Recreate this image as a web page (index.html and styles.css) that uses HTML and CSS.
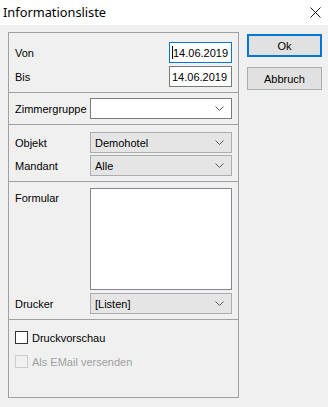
FILE: index.html
```html
<!DOCTYPE html>
<html lang="de">
<head>
<meta charset="utf-8">
<title>Informationsliste</title>
<link rel="stylesheet" href="styles.css">
</head>
<body>
<div class="window">
  <div class="titlebar">
    <span class="title">Informationsliste</span>
    <svg class="close" width="11" height="11" viewBox="0 0 11 11"><path d="M0.5 0.5 L10.5 10.5 M10.5 0.5 L0.5 10.5" stroke="#1a1a1a" stroke-width="1" fill="none"/></svg>
  </div>
  <div class="content">
    <div class="frame">
      <div class="section s1">
        <div class="row">
          <span class="label">Von</span>
          <div class="datebox focus"><span class="caret"></span>14.06.2019</div>
        </div>
        <div class="row">
          <span class="label">Bis</span>
          <div class="datebox">14.06.2019</div>
        </div>
      </div>
      <div class="section s2">
        <div class="row">
          <span class="label">Zimmergruppe</span>
          <div class="combo edit"><span class="value"></span>
            <svg class="chev" width="9" height="5" viewBox="0 0 9 5"><path d="M0.5 0.5 L4.5 4.5 L8.5 0.5" stroke="#5a5a5a" fill="none"/></svg>
          </div>
        </div>
      </div>
      <div class="section s3">
        <div class="row">
          <span class="label">Objekt</span>
          <div class="combo"><span class="value">Demohotel</span>
            <svg class="chev" width="9" height="5" viewBox="0 0 9 5"><path d="M0.5 0.5 L4.5 4.5 L8.5 0.5" stroke="#5a5a5a" fill="none"/></svg>
          </div>
        </div>
        <div class="row">
          <span class="label">Mandant</span>
          <div class="combo"><span class="value">Alle</span>
            <svg class="chev" width="9" height="5" viewBox="0 0 9 5"><path d="M0.5 0.5 L4.5 4.5 L8.5 0.5" stroke="#5a5a5a" fill="none"/></svg>
          </div>
        </div>
      </div>
      <div class="section s4">
        <div class="row top">
          <span class="label lbl-top">Formular</span>
          <div class="listbox"></div>
        </div>
        <div class="row">
          <span class="label">Drucker</span>
          <div class="combo"><span class="value">[Listen]</span>
            <svg class="chev" width="9" height="5" viewBox="0 0 9 5"><path d="M0.5 0.5 L4.5 4.5 L8.5 0.5" stroke="#5a5a5a" fill="none"/></svg>
          </div>
        </div>
      </div>
      <div class="section s5">
        <label class="check"><span class="box"></span><span>Druckvorschau</span></label>
        <label class="check disabled"><span class="box"></span><span>Als EMail versenden</span></label>
      </div>
    </div>
    <div class="buttons">
      <div class="btn default">Ok</div>
      <div class="btn">Abbruch</div>
    </div>
  </div>
</div>
</body>
</html>
```
FILE: styles.css
```css
* { box-sizing: border-box; }
html, body { margin: 0; padding: 0; }
body {
  width: 328px;
  height: 407px;
  overflow: hidden;
  background: #f0f0f0;
  font-family: "Liberation Sans", Arial, sans-serif;
  font-size: 11px;
  color: #000;
}
.window { width: 328px; height: 407px; display: flex; flex-direction: column; }
.titlebar {
  height: 25px;
  background: #fff;
  display: flex;
  align-items: center;
  justify-content: space-between;
  padding: 0 7px 1px 3px;
}
.title {
  font-family: "Noto Sans", "Open Sans", sans-serif;
  font-size: 12.8px;
  color: #000;
}
.close { display: block; }
.content {
  display: flex;
  align-items: flex-start;
  padding: 7px 6px 0 8px;
  gap: 8px;
}
.frame {
  width: 232px;
  height: 366px;
  border: 1px solid #a0a0a0;
  display: flex;
  flex-direction: column;
}
.section {
  padding: 0 6px 0 6px;
  display: flex;
  flex-direction: column;
}
.section + .section { border-top: 1px solid #a0a0a0; }
.s1 { height: 59px; padding-top: 9px; gap: 3px; }
.s2 { height: 32px; padding-top: 5px; }
.s3 { height: 57px; padding-top: 7px; gap: 2px; }
.s4 { height: 138px; padding-top: 6px; gap: 3px; }
.s5 { flex: 1; padding-top: 11px; gap: 11px; }
.row { display: flex; align-items: center; height: 21px; }
.row.top { align-items: flex-start; height: auto; }
.label { width: 75px; flex: none; white-space: nowrap; }
.lbl-top { padding-top: 4px; }
.datebox {
  margin-left: auto;
  width: 63px;
  height: 21px;
  background: #fff;
  border: 1px solid #7a7a7a;
  padding-left: 2px;
  display: flex;
  align-items: center;
}
.datebox.focus { border-color: #0078d7; }
.caret { width: 1px; height: 13px; background: #000; margin-right: 0; }
.combo {
  flex: 1;
  height: 21px;
  border: 1px solid #adadad;
  background: #e5e5e5;
  display: flex;
  align-items: center;
  padding: 0 7px 0 4px;
}
.combo.edit { background: #fff; border-color: #7a7a7a; }
.combo .value { flex: 1; }
.chev { display: block; }
.listbox {
  flex: 1;
  height: 102px;
  background: #fff;
  border: 1px solid #828790;
}
.check { display: flex; align-items: center; gap: 4px; height: 13px; }
.check .box {
  width: 13px; height: 13px;
  border: 1px solid #333;
  background: #fff;
  flex: none;
}
.check.disabled { color: #a0a0a0; }
.check.disabled .box { border-color: #cccccc; background: #f0f0f0; }
.buttons {
  display: flex;
  flex-direction: column;
  gap: 10px;
  padding-top: 2px;
}
.btn {
  width: 75px;
  height: 23px;
  background: #e1e1e1;
  border: 1px solid #adadad;
  display: flex;
  align-items: center;
  justify-content: center;
}
.btn.default { border: 2px solid #0078d7; }
```
